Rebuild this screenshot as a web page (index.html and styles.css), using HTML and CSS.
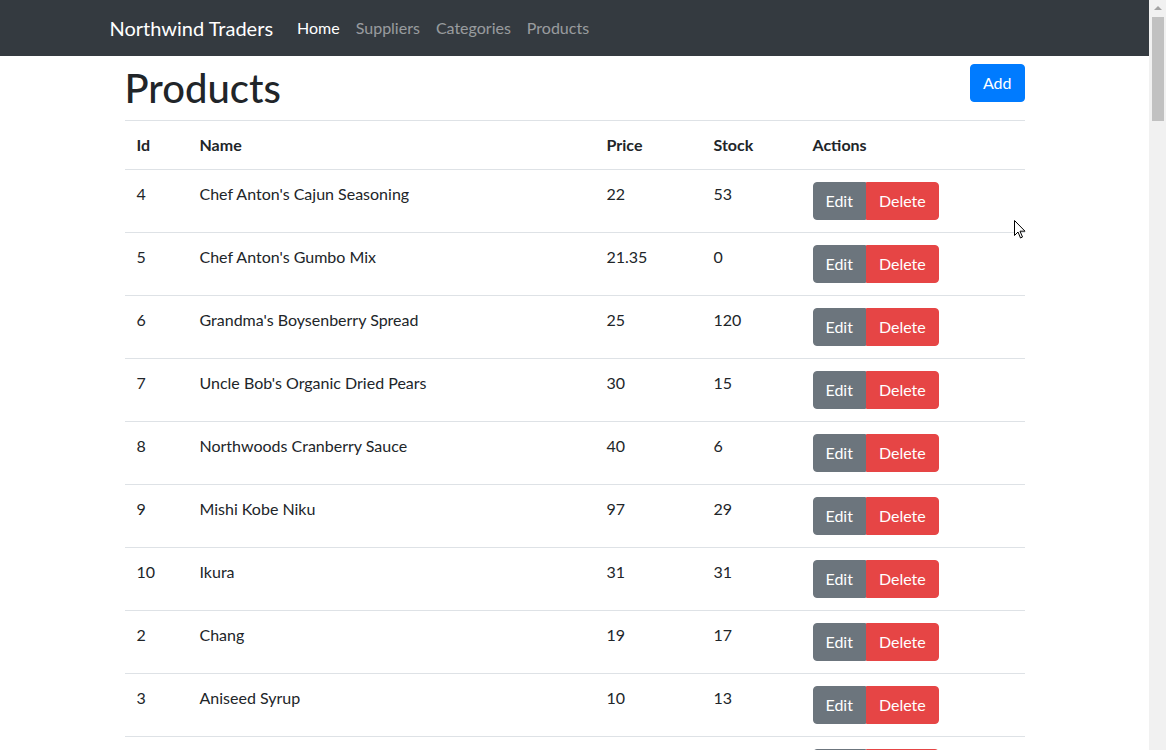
FILE: index.html
```html
<!DOCTYPE html>
<html lang="en">
<head>
<meta charset="utf-8">
<title>Products - Northwind Traders</title>
<link rel="stylesheet" href="styles.css">
</head>
<body>
<div class="window">
  <div class="page">
    <nav class="navbar">
      <div class="nav-container">
        <a class="brand" href="#">Northwind Traders</a>
        <ul class="nav">
          <li><a class="nav-link active" href="#">Home</a></li>
          <li><a class="nav-link" href="#">Suppliers</a></li>
          <li><a class="nav-link" href="#">Categories</a></li>
          <li><a class="nav-link" href="#">Products</a></li>
        </ul>
      </div>
    </nav>
    <main class="container">
      <div class="header">
        <h1>Products</h1>
        <button class="btn btn-primary">Add</button>
      </div>
      <table class="table">
        <colgroup>
          <col class="c-id"><col class="c-name"><col class="c-price"><col class="c-stock"><col class="c-actions">
        </colgroup>
        <thead>
          <tr><th>Id</th><th>Name</th><th>Price</th><th>Stock</th><th>Actions</th></tr>
        </thead>
        <tbody>
          <tr><td>4</td><td>Chef Anton's Cajun Seasoning</td><td>22</td><td>53</td><td><div class="btn-group"><button class="btn btn-secondary">Edit</button><button class="btn btn-danger">Delete</button></div></td></tr>
          <tr><td>5</td><td>Chef Anton's Gumbo Mix</td><td>21.35</td><td>0</td><td><div class="btn-group"><button class="btn btn-secondary">Edit</button><button class="btn btn-danger">Delete</button></div></td></tr>
          <tr><td>6</td><td>Grandma's Boysenberry Spread</td><td>25</td><td>120</td><td><div class="btn-group"><button class="btn btn-secondary">Edit</button><button class="btn btn-danger">Delete</button></div></td></tr>
          <tr><td>7</td><td>Uncle Bob's Organic Dried Pears</td><td>30</td><td>15</td><td><div class="btn-group"><button class="btn btn-secondary">Edit</button><button class="btn btn-danger">Delete</button></div></td></tr>
          <tr><td>8</td><td>Northwoods Cranberry Sauce</td><td>40</td><td>6</td><td><div class="btn-group"><button class="btn btn-secondary">Edit</button><button class="btn btn-danger">Delete</button></div></td></tr>
          <tr><td>9</td><td>Mishi Kobe Niku</td><td>97</td><td>29</td><td><div class="btn-group"><button class="btn btn-secondary">Edit</button><button class="btn btn-danger">Delete</button></div></td></tr>
          <tr><td>10</td><td>Ikura</td><td>31</td><td>31</td><td><div class="btn-group"><button class="btn btn-secondary">Edit</button><button class="btn btn-danger">Delete</button></div></td></tr>
          <tr><td>2</td><td>Chang</td><td>19</td><td>17</td><td><div class="btn-group"><button class="btn btn-secondary">Edit</button><button class="btn btn-danger">Delete</button></div></td></tr>
          <tr><td>3</td><td>Aniseed Syrup</td><td>10</td><td>13</td><td><div class="btn-group"><button class="btn btn-secondary">Edit</button><button class="btn btn-danger">Delete</button></div></td></tr>
          <tr><td>1</td><td>Chai</td><td>18</td><td>39</td><td><div class="btn-group"><button class="btn btn-secondary">Edit</button><button class="btn btn-danger">Delete</button></div></td></tr>
        </tbody>
      </table>
    </main>
    <svg class="cursor" width="12" height="20" viewBox="0 0 12 20"><path d="M0.5 0.5 L0.5 15.5 L4 12 L6.5 18 L8.5 17 L6 11.2 L11 11.2 Z" fill="#fff" stroke="#000" stroke-width="1"/></svg>
  </div>
  <div class="scrollbar">
    <div class="arrow"></div>
    <div class="thumb"></div>
  </div>
</div>
</body>
</html>
```
FILE: styles.css
```css
* { box-sizing: border-box; }
html, body { margin: 0; padding: 0; height: 100%; overflow: hidden; }
body {
  font-family: Lato, "Open Sans", "Liberation Sans", sans-serif;
  font-size: 16px;
  line-height: 1.5;
  color: #212529;
  background: #fff;
}
.window { display: flex; height: 750px; }
.page { flex: 1; position: relative; overflow: hidden; }

.navbar { background: #343a40; height: 56px; padding: 8px 0; }
.nav-container { width: 960px; margin: 0 auto; padding: 0 15px; display: flex; align-items: center; height: 40px; }
.brand { color: #fff; font-size: 20px; line-height: 30px; text-decoration: none; margin-right: 16px; }
.nav { list-style: none; margin: 0; padding: 0; display: flex; }
.nav-link { display: block; padding: 8px 8px; color: rgba(255,255,255,.5); text-decoration: none; }
.nav-link.active { color: #fff; }

.container { width: 900px; margin: 0 auto; }
.header { display: flex; justify-content: space-between; align-items: flex-start; margin-top: 8px; }
h1 { margin: 0 0 8px; font-size: 40px; font-weight: 500; line-height: 48px; }

.btn {
  font-family: inherit; font-size: 16px; line-height: 24px;
  border: 1px solid transparent; padding: 6px 12px; border-radius: 4px;
  color: #fff; cursor: pointer;
}
.btn-primary { background: #007bff; border-color: #007bff; }
.btn-secondary { background: #6c757d; border-color: #6c757d; }
.btn-danger { background: #e64545; border-color: #e64545; }
.btn-group { display: inline-flex; }
.btn-group .btn-secondary { border-top-right-radius: 0; border-bottom-right-radius: 0; }
.btn-group .btn-danger { border-top-left-radius: 0; border-bottom-left-radius: 0; }

.table { width: 100%; border-collapse: collapse; table-layout: fixed; }
.c-id { width: 63px; }
.c-name { width: 407px; }
.c-price { width: 107px; }
.c-stock { width: 99px; }
.c-actions { width: 224px; }
.table th, .table td { padding: 12px; vertical-align: top; text-align: left; border-top: 1px solid #dee2e6; }
.table th { font-weight: 700; border-bottom: 2px solid #dee2e6; }
.table thead th { border-bottom: 1px solid #dee2e6; }

.cursor { position: absolute; left: 1014px; top: 220px; }

.scrollbar { width: 17px; background: #f1f1f1; display: flex; flex-direction: column; align-items: center; }
.arrow { margin-top: 6px; width: 0; height: 0; border-left: 4px solid transparent; border-right: 4px solid transparent; border-bottom: 4px solid #a3a3a3; }
.thumb { margin-top: 7px; width: 12px; height: 104px; background: #c1c1c1; }
```
